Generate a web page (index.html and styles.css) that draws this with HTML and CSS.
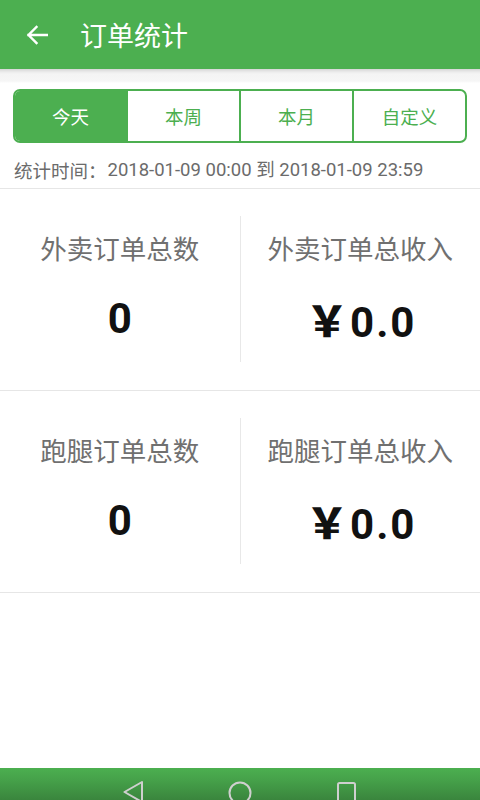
FILE: index.html
```html
<!DOCTYPE html>
<html lang="zh">
<head>
<meta charset="utf-8">
<title>订单统计</title>
<link rel="stylesheet" href="styles.css">
</head>
<body>
<div class="page">
  <header class="appbar">
    <svg class="back" width="22" height="20" viewBox="0 0 22 20">
      <path d="M21 10H2.5M10.5 2 2.5 10l8 8" fill="none" stroke="#fff" stroke-width="2.4" stroke-linecap="square"/>
    </svg>
    <h1 class="title">订单统计</h1>
  </header>
  <div class="shade"></div>
  <div class="tabs-wrap">
    <div class="tabs">
      <div class="tab active">今天</div>
      <div class="tab">本周</div>
      <div class="tab">本月</div>
      <div class="tab">自定义</div>
    </div>
  </div>
  <div class="range"><span class="range-label">统计时间：</span>2018-01-09 00:00 到 2018-01-09 23:59</div>
  <section class="stats">
    <div class="cell">
      <div class="label">外卖订单总数</div>
      <div class="value">0</div>
    </div>
    <div class="cell">
      <div class="label">外卖订单总收入</div>
      <div class="value"><span class="yen">￥</span><span class="num">0.0</span></div>
    </div>
  </section>
  <section class="stats">
    <div class="cell">
      <div class="label">跑腿订单总数</div>
      <div class="value">0</div>
    </div>
    <div class="cell">
      <div class="label">跑腿订单总收入</div>
      <div class="value"><span class="yen">￥</span><span class="num">0.0</span></div>
    </div>
  </section>
  <nav class="sysnav">
    <svg width="480" height="32" viewBox="0 768 480 32">
      <path d="M142 782 124.5 792 142 802Z" fill="none" stroke="#cfcfcf" stroke-width="2" stroke-linejoin="round"/>
      <circle cx="240" cy="793" r="10.5" fill="none" stroke="#cfcfcf" stroke-width="2"/>
      <rect x="338" y="783" width="17" height="22" rx="1.5" fill="none" stroke="#cfcfcf" stroke-width="2"/>
    </svg>
  </nav>
</div>
</body>
</html>
```

FILE: styles.css
```css
* { box-sizing: border-box; }
html, body { margin: 0; padding: 0; }
body {
  background: #fff;
  font-family: Roboto, "Noto Sans CJK SC", sans-serif;
  width: 480px;
  height: 800px;
  overflow: hidden;
  text-spacing-trim: space-all;
}
.page {
  display: flex;
  flex-direction: column;
  height: 800px;
}
.appbar {
  height: 69px;
  background: #4caf50;
  display: flex;
  align-items: center;
  padding-left: 26px;
  flex: none;
}
.back { display: block; }
.title {
  margin: 0 0 0 32px;
  font-size: 27px;
  font-weight: 400;
  color: #fff;
  line-height: 36px;
  font-family: "Noto Sans CJK SC", sans-serif;
}
.shade {
  height: 14px;
  flex: none;
  background: linear-gradient(#d6d6d6 0, #ececec 3px, #f4f4f4 5px, #f6f6f6 12px, #fff 14px);
}
.tabs-wrap {
  padding: 6px 13px 0;
}
.tabs {
  display: flex;
  height: 54px;
  border: 2px solid #4caf50;
  border-radius: 7px;
  overflow: hidden;
}
.tab {
  flex: 1;
  display: flex;
  align-items: center;
  justify-content: center;
  font-size: 18.5px;
  color: #4caf50;
  font-family: "Noto Sans CJK SC", sans-serif;
  border-left: 2px solid #4caf50;
}
.tab:first-child { border-left: 0; }
.tab.active {
  background: #4caf50;
  color: #fff;
}
.range {
  height: 46px;
  padding: 15px 0 0 14px;
  font-size: 18.5px;
  line-height: 24px;
  color: #6b6b6b;
  border-bottom: 1px solid #e6e6e6;
  white-space: nowrap;
  flex: none;
}
.range-label {
  font-family: "Noto Sans CJK SC", sans-serif;
  vertical-align: top;
  line-height: 24px;
  margin-right: 1px;
}
.stats {
  display: flex;
  padding: 27px 0 28px;
  border-bottom: 1px solid #e6e6e6;
}
.cell {
  flex: 1;
  display: flex;
  flex-direction: column;
  align-items: center;
  padding-top: 14px;
  height: 146px;
}
.cell + .cell { border-left: 1px solid #e8e8e8; }
.label {
  font-size: 26.5px;
  line-height: 36px;
  color: #707070;
  font-family: "Noto Sans CJK SC", sans-serif;
}
.value {
  margin-top: 28px;
  font-size: 42px;
  line-height: 50px;
  font-weight: 700;
  color: #111;
  display: flex;
  align-items: baseline;
}
.num { letter-spacing: 2px; margin-right: -2px; }
.yen {
  font-family: "Noto Sans CJK SC", sans-serif;
  font-weight: 900;
  font-size: 42px;
  margin-right: 2px;
}
.sysnav {
  margin-top: auto;
  height: 32px;
  flex: none;
  background: linear-gradient(#4caf50, #45a049 40%, #3a853d);
  overflow: hidden;
}
.sysnav svg { display: block; }
```
